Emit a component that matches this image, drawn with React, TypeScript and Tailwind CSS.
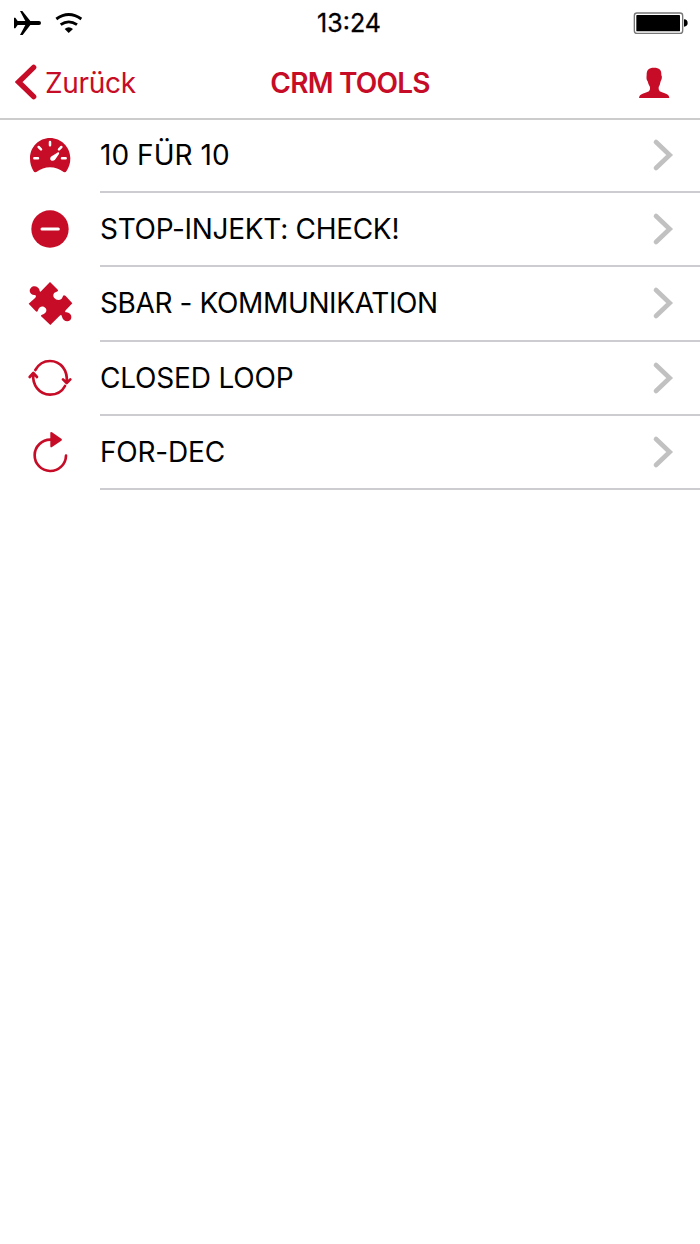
import type { ReactNode } from "react";

const RedIcon = ({ children }: { children: ReactNode }) => (
  <svg
    className="ml-5 size-[60px] shrink-0 text-[#c60c26]"
    viewBox="0 0 180 180"
    fill="currentColor"
    aria-hidden
  >
    {children}
  </svg>
);

const GaugeIcon = () => (
  <RedIcon>
    <path d="M49 138Q43 140 40 134Q30 118 30 97C30 63 57 36 90 36S151 63 151 97Q151 118 140 134Q137 140 131 138Q112 124 90 124T49 138Z" />
    <path
      d="M90 48V58M56 63L63 70M124 63L117 70M43 97H54M126 97H137"
      stroke="white"
      strokeWidth="7.500"
      strokeLinecap="round"
    />
    <path
      d="M112 80C116 77 119 80 117 84L105 101C99 108 88 103 91 95Q92 92 96 90Z"
      fill="white"
    />
  </RedIcon>
);

const StopIcon = () => (
  <RedIcon>
    <circle cx="90" cy="87" r="56" />
    <path d="M66 87H115" stroke="white" strokeWidth="9" strokeLinecap="round" />
  </RedIcon>
);

const PuzzleIcon = () => (
  <RedIcon>
    <path d="M90 24L112 46Q117 51 110 53C99 56 98 65 103 72C109 80 125 81 128 68Q130 60 137 66L157 88L137 109Q132 115 140 115C155 117 157 132 151 138C142 146 128 140 126 128Q125 120 119 125L91 153L65 128Q60 124 66 122C78 120 82 109 77 103C70 94 57 97 54 109Q52 117 46 110L26 89L46 71Q51 64 43 63C28 61 26 48 33 41C42 33 57 38 59 50Q60 57 66 49Z" />
  </RedIcon>
);

const LoopIcon = () => (
  <RedIcon>
    <g
      fill="none"
      stroke="currentColor"
      strokeWidth="8"
      strokeLinecap="round"
      strokeLinejoin="round"
    >
      <path d="M46 63C56 45 71 36 90 36C122 36 144 64 140 100M129 91L140 102L151 91" />
      <path d="M135 111C126 128 109 137 90 137C58 137 36 108 40 74M29 84L40 72L51 84" />
    </g>
  </RedIcon>
);

const RepeatIcon = () => (
  <RedIcon>
    <path
      d="M92 50A47 47 0 1 0 138 98"
      fill="none"
      stroke="currentColor"
      strokeWidth="8"
      strokeLinecap="round"
    />
    <path d="M91 30Q91 25 96 28L124 47Q128 50 124 53L96 72Q91 75 91 70Z" />
  </RedIcon>
);

const tools = [
  { label: "10 FÜR 10", icon: <GaugeIcon />, text: "tracking-[0.05px]" },
  { label: "STOP-INJEKT: CHECK!", icon: <StopIcon />, text: "tracking-[-0.3px]" },
  { label: "SBAR - KOMMUNIKATION", icon: <PuzzleIcon />, text: "tracking-[-0.38px]" },
  { label: "CLOSED LOOP", icon: <LoopIcon />, text: "tracking-[-0.2px]" },
  { label: "FOR-DEC", icon: <RepeatIcon />, text: "tracking-[-0.2px]" },
];

const StatusBar = () => (
  <div className="grid h-[46px] grid-cols-3 items-center">
    <div className="flex items-center">
      <svg className="ml-[14px] h-[26px] w-[27px]" viewBox="42 28 81 78" aria-hidden>
        <path d="M42 51H46L53 61H76L60 31H67L91 61H117Q123 61 123 67T117 73H91L68 103H60L76 73H53L46 83H42Z" />
      </svg>
      <svg className="ml-[14px] h-[22px] w-[28px]" viewBox="164 33 84 66" aria-hidden>
        <g fill="none" stroke="black" strokeWidth="8.500">
          <path d="M168 54Q205 27 243 54" />
          <path d="M181 71Q205 54 230 71" />
        </g>
        <path d="M193 84Q205 74 218 84L205 96Z" />
      </svg>
    </div>
    <span className="-ml-[2px] text-center text-[25px] leading-none [-webkit-text-stroke:0.3px_black]">
      13:24
    </span>
    <svg className="mr-[11px] h-[24px] w-[56px] justify-self-end" viewBox="100 32 168 72" aria-hidden>
      <rect x="104" y="38" width="145" height="61" rx="8" fill="white" stroke="#777" strokeWidth="4" />
      <rect x="110" y="44" width="131" height="49" rx="2" />
      <path d="M253 57Q264 58 264 68T253 79Z" />
    </svg>
  </div>
);

export default function App() {
  return (
    <div className="min-h-[1244px] w-[700px] bg-white font-['Inter','Liberation_Sans',sans-serif] text-black">
      <header className="h-[120px] border-b-2 border-[#ccc]">
        <StatusBar />
        <nav className="grid h-[72px] grid-cols-[1fr_auto_1fr] items-center text-[#c60c26]">
          <a className="flex items-center" href="#">
            <svg className="ml-[15px] h-[36px] w-[23px]" viewBox="0 0 69 108" aria-hidden>
              <path
                d="M56 10L11 54L56 98"
                fill="none"
                stroke="currentColor"
                strokeWidth="16"
                strokeLinecap="round"
              />
            </svg>
            <span className="ml-[7px] pt-[2px] text-[28px] tracking-[-0.3px]">Zurück</span>
          </a>
          <h1 className="pt-[2px] text-[28px] font-semibold tracking-[-0.8px]">CRM TOOLS</h1>
          <svg
            className="mr-[30px] mt-[2px] h-[32px] w-[32px] justify-self-end"
            viewBox="114 201 96 96"
            fill="currentColor"
            aria-hidden
          >
            <path d="M162 203C178 203 185 210 184 225Q187 229 185 237L182 244Q180 255 176 261V268Q177 275 186 277L198 281Q207 284 208 294H117Q118 284 128 281L140 277Q149 275 150 268V261Q145 254 143 244Q138 239 140 225C140 210 146 203 162 203Z" />
          </svg>
        </nav>
      </header>

      <ul className="-mt-[1.25px]">
        {tools.map((tool) => (
          <li key={tool.label} className="flex h-[74.25px]">
            <div className="flex w-[100px] items-center">{tool.icon}</div>
            <div className="flex flex-1 items-center justify-between border-b-2 border-[#cdccd1]">
              <span className={`text-[28px] leading-none ${tool.text}`}>{tool.label}</span>
              <svg className="mr-[25px] h-[34px] w-[24px]" viewBox="0 0 72 102" aria-hidden>
                <path
                  d="M15 12L56 51L15 90"
                  fill="none"
                  stroke="#c1c1c1"
                  strokeWidth="14"
                  strokeLinecap="round"
                />
              </svg>
            </div>
          </li>
        ))}
      </ul>
    </div>
  );
}
